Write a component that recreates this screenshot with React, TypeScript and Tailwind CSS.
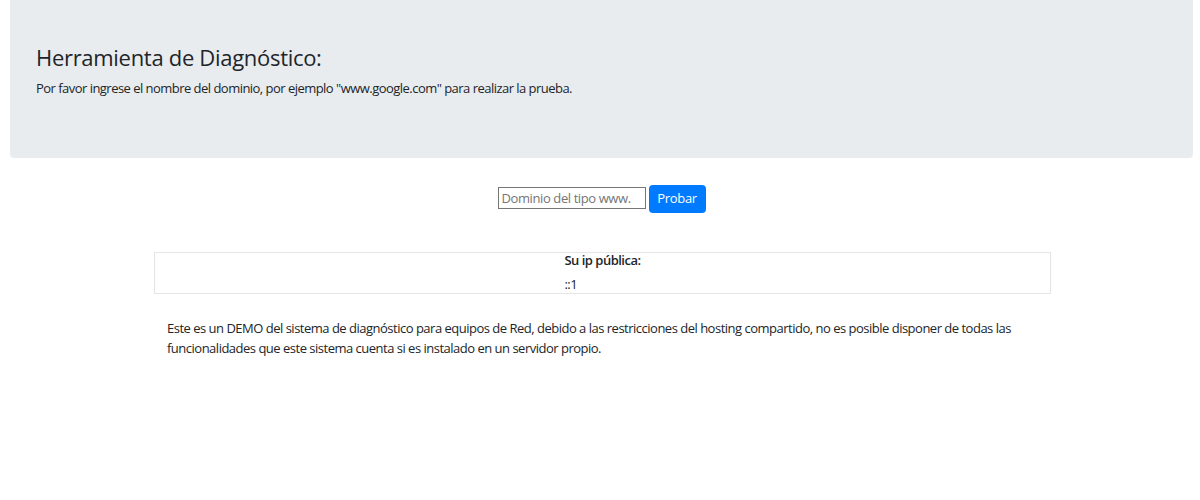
import React from "react";

export default function App() {
  return (
    <div className="min-h-[500px] w-[1200px] bg-white text-[#212529]" style={{ fontFamily: '"Open Sans", sans-serif' }}>
      <div className="ml-[10px] mr-[7px] h-[158px] rounded-b-[4px] bg-[#e9ecef] pl-[26px] pt-[43px]">
        <h1 className="text-[22px] leading-[28px] font-normal tracking-[-0.3px]">Herramienta de Diagnóstico:</h1>
        <p className="mt-[7px] text-[13px] leading-[20px] tracking-[-0.53px]">
          Por favor ingrese el nombre del dominio, por ejemplo "www.google.com" para realizar la prueba.
        </p>
      </div>
      <div className="mt-[27px] flex justify-center gap-[3px] pl-[3px]">
        <input
          className="mt-[2px] h-[22px] w-[148px] border border-[#767676] px-[3px] text-[13px] tracking-[-0.4px] placeholder:text-[#757575] outline-none"
          placeholder="Dominio del tipo www."
        />
        <button className="h-[28px] w-[57px] rounded-[4px] bg-[#007bff] text-[13px] text-white tracking-[-0.3px]">Probar</button>
      </div>
      <div className="ml-[154px] mt-[39px] w-[897px] border border-[#e5e5e5]">
        <div className="flex justify-center">
          <div className="text-[13px] leading-[18px] tracking-[-0.5px]">
            <div className="-mt-[2px] font-semibold">Su ip pública:</div>
            <div className="mt-[6px]">::1</div>
          </div>
        </div>
      </div>
      <p className="ml-[167px] mt-[24px] w-[870px] text-[13px] leading-[20px] tracking-[-0.5px]">
        Este es un DEMO del sistema de diagnóstico para equipos de Red, debido a las restricciones del hosting compartido, no es posible disponer de todas las funcionalidades que este sistema cuenta si es instalado en un servidor propio.
      </p>
    </div>
  );
}
